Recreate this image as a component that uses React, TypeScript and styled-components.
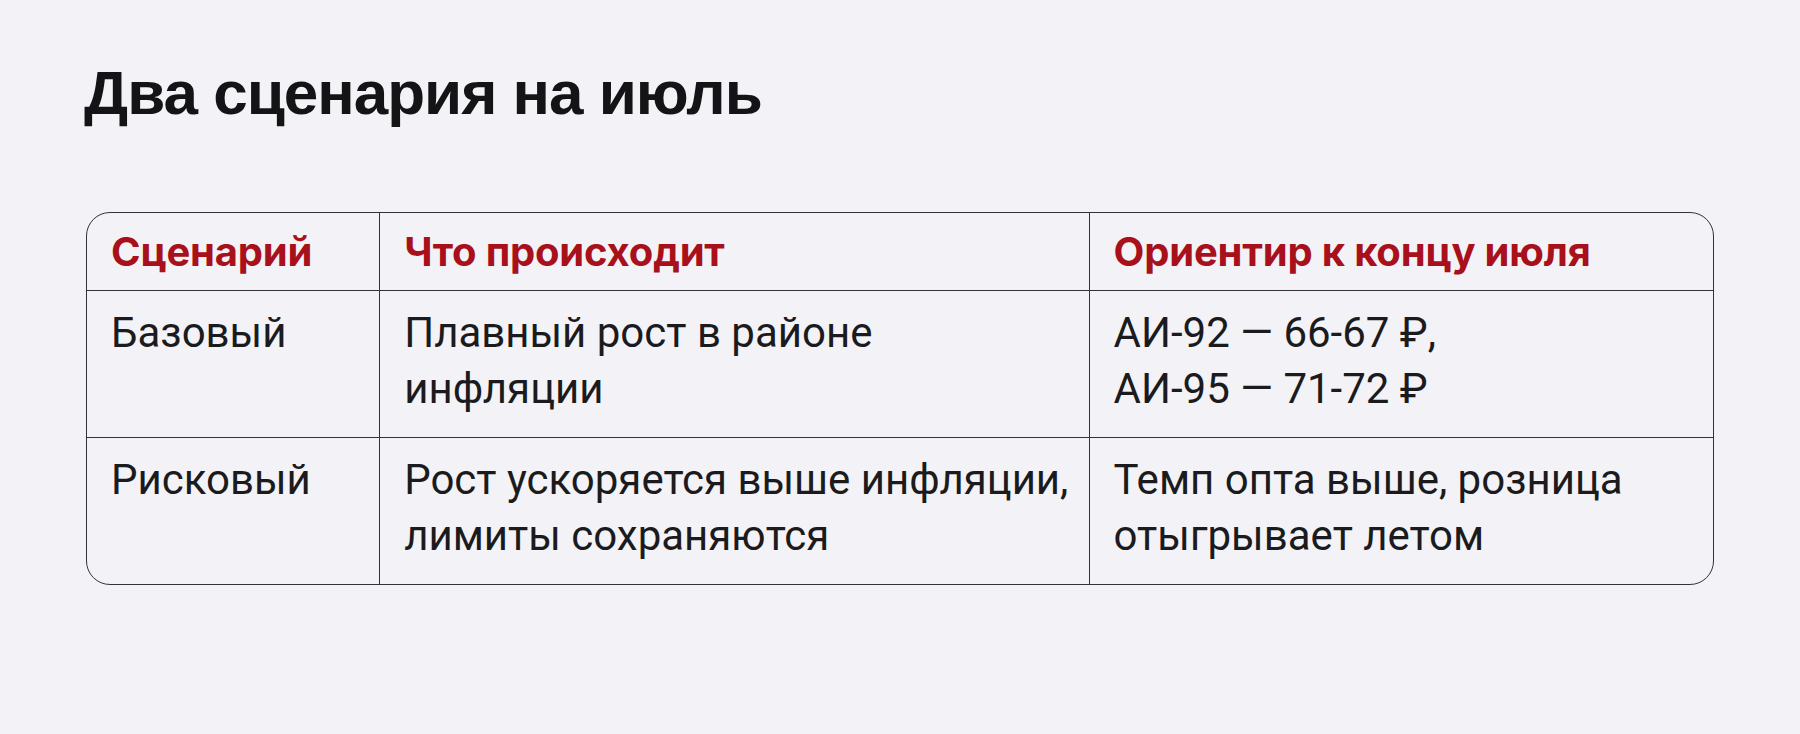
import React from "react";
import styled, { createGlobalStyle } from "styled-components";

const GlobalStyle = createGlobalStyle`
  html, body {
    margin: 0;
    padding: 0;
    background: #f3f2f6;
  }

  body {
    font-family: Roboto, "Liberation Sans", Arial, sans-serif;
    color: #1b1b1d;
  }
`;

const Page = styled.main`
  min-height: 734px;
  padding: 56px 86px 0;
  box-sizing: border-box;
`;

const Title = styled.h1`
  margin: 0 0 82px -2px;
  font-family: "Liberation Sans", Arial, sans-serif;
  font-size: 62px;
  line-height: 74px;
  font-weight: 700;
  letter-spacing: -1px;
  color: #141416;
`;

const TableFrame = styled.div`
  width: 1628px;
  border: 1.5px solid #333337;
  border-radius: 24px;
  overflow: hidden;
  box-sizing: border-box;
`;

const Table = styled.table`
  width: 100%;
  border-collapse: separate;
  border-spacing: 0;
  table-layout: fixed;
`;

const HeadCell = styled.th<{ $width: number }>`
  width: ${(p) => p.$width}px;
  box-sizing: border-box;
  padding: 11px 24px 10px;
  text-align: left;
  vertical-align: top;
  font-family: Inter, Roboto, sans-serif;
  font-size: 40px;
  line-height: 56px;
  font-weight: 700;
  letter-spacing: -0.2px;
  color: #a8101b;
  border-bottom: 1.5px solid #333337;

  &:not(:last-child) {
    border-right: 1.5px solid #333337;
  }
`;

const Row = styled.tr`
  &:not(:last-child) td {
    border-bottom: 1.5px solid #333337;
  }
`;

const Cell = styled.td`
  height: 146px;
  box-sizing: border-box;
  padding: 14px 20px 20px 24px;
  vertical-align: top;
  white-space: nowrap;
  font-size: 42px;
  line-height: 56px;
  font-weight: 400;
  color: #1b1b1d;

  &:not(:last-child) {
    border-right: 1.5px solid #333337;
  }
`;

const columns = [
  { title: "Сценарий", width: 293 },
  { title: "Что происходит", width: 709 },
  { title: "Ориентир к концу июля", width: 623 },
];

const rows = [
  {
    name: "Базовый",
    what: ["Плавный рост в районе", "инфляции"],
    target: ["АИ-92 — 66-67 ₽,", "АИ-95 — 71-72 ₽"],
  },
  {
    name: "Рисковый",
    what: ["Рост ускоряется выше инфляции,", "лимиты сохраняются"],
    target: ["Темп опта выше, розница", "отыгрывает летом"],
  },
];

const Lines = ({ lines }: { lines: string[] }) => (
  <>
    {lines.map((line, i) => (
      <React.Fragment key={line}>
        {i > 0 && <br />}
        {line}
      </React.Fragment>
    ))}
  </>
);

const App = () => {
  return (
    <>
      <GlobalStyle />
      <Page>
        <Title>Два сценария на июль</Title>
        <TableFrame>
          <Table>
            <thead>
              <tr>
                {columns.map((col) => (
                  <HeadCell key={col.title} $width={col.width}>
                    {col.title}
                  </HeadCell>
                ))}
              </tr>
            </thead>
            <tbody>
              {rows.map((row) => (
                <Row key={row.name}>
                  <Cell>{row.name}</Cell>
                  <Cell>
                    <Lines lines={row.what} />
                  </Cell>
                  <Cell>
                    <Lines lines={row.target} />
                  </Cell>
                </Row>
              ))}
            </tbody>
          </Table>
        </TableFrame>
      </Page>
    </>
  );
};

export default App;
